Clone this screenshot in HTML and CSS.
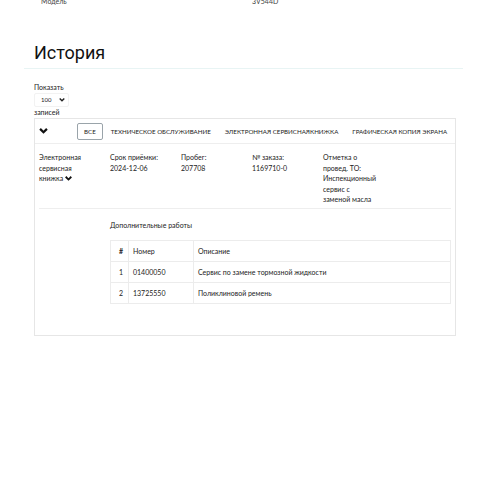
FILE: index.html
```html
<!DOCTYPE html>
<html lang="ru">
<head>
<meta charset="utf-8">
<link rel="stylesheet" href="styles.css">
</head>
<body>
<div class="spec">
  <span class="spec-label">Модель</span>
  <span class="spec-value">3V544D</span>
</div>
<div class="page">
  <h2 class="title">История</h2>
  <div class="rule"></div>
  <div class="inner">
    <div class="length">
      <div>Показать</div>
      <div class="select">100 <svg width="6" height="4" viewBox="0 0 10 7"><path d="M1 1l4 4 4-4" fill="none" stroke="#222" stroke-width="2.4"/></svg></div>
      <div>записей</div>
    </div>
    <div class="card">
      <div class="tabs">
        <span class="chev"><svg width="9" height="6" viewBox="0 0 10 7"><path d="M1 1l4 4 4-4" fill="none" stroke="#111" stroke-width="2.6"/></svg></span>
        <span class="tab active">ВСЕ</span>
        <span class="tab">ТЕХНИЧЕСКОЕ ОБСЛУЖИВАНИЕ</span>
        <span class="tab">ЭЛЕКТРОННАЯ СЕРВИСНАЯКНИЖКА</span>
        <span class="tab">ГРАФИЧЕСКАЯ КОПИЯ ЭКРАНА</span>
      </div>
      <div class="record">
        <div class="c1">Электронная сервисная книжка <svg width="7" height="5" viewBox="0 0 10 7"><path d="M1 1l4 4 4-4" fill="none" stroke="#111" stroke-width="2.6"/></svg></div>
        <div class="c2">Срок приёмки:<br>2024-12-06</div>
        <div class="c3">Пробег:<br>207708</div>
        <div class="c4">№ заказа:<br>1169710-0</div>
        <div class="c5">Отметка о провед. ТО:<br>Инспекционный сервис с заменой масла</div>
      </div>
      <div class="details">
        <div class="sub">Дополнительные работы</div>
        <table class="works">
          <tr><th>#</th><th>Номер</th><th>Описание</th></tr>
          <tr><td>1</td><td>01400050</td><td>Сервис по замене тормозной жидкости</td></tr>
          <tr><td>2</td><td>13725550</td><td>Поликлиновой ремень</td></tr>
        </table>
      </div>
    </div>
  </div>
</div>
</body>
</html>
```
FILE: styles.css
```css
html, body { margin: 0; padding: 0; background: #fff; }
body { font-family: "Lato", "Noto Sans", sans-serif; color: #222; font-size: 7px; }
.spec { display: flex; margin-top: -4px; height: 10px; line-height: 10px; font-size: 7px; color: #444; }
.spec-label { margin-left: 41px; width: 211px; }
.page { padding: 0 32px 0 24px; }
.title { margin: 35px 0 0 10px; font-family: "Roboto", sans-serif; font-weight: 400; font-size: 18px; line-height: 24px; color: #111; }
.rule { height: 1px; background: #e8f4f4; margin-top: 3px; }
.inner { padding-left: 10px; padding-right: 7px; }
.length { margin-top: 13px; line-height: 10px; }
.select { display: inline-flex; align-items: center; gap: 8px; border: 1px solid #f2f2f2; border-radius: 2px; padding: 0 3px 0 6px; height: 12px; margin: 1px 0 0 0; font-size: 6px; }
.card { border: 1px solid #e6e6e6; margin-top: 1px; height: 218px; box-sizing: border-box; }
.tabs { display: flex; align-items: center; height: 24px; border-bottom: 1px solid #eee; padding-left: 4px; white-space: nowrap; }
.chev { width: 10px; display: flex; justify-content: center; margin-right: 29px; }
.tab { font-size: 6.2px; margin-right: 14px; color: #222; }
.tab.active { border: 1px solid #9aa4aa; border-radius: 2px; padding: 4px 6px; margin-right: 8px; }
.record { display: grid; grid-template-columns: 60px 60px 60px 60px 56px; column-gap: 11px; padding: 8px 0 3px 0; margin: 0 4px; border-bottom: 1px solid #eee; line-height: 10.5px; font-size: 7px; }
.c1 { width: 46px; }
.c5 { width: 52px; }
.details { padding: 11px 4px 0 75px; }
.sub { font-size: 7px; line-height: 10px; }
.works { margin-top: 10px; width: 100%; border-collapse: collapse; font-size: 7px; }
.works th, .works td { border: 1px solid #ececec; height: 20px; padding: 0 4px; text-align: left; font-weight: 400; }
.works th:first-child { font-weight: 700; width: 9px; padding: 0 0 0 8px; }
.works td:first-child { padding: 0 0 0 8px; }
.works th:nth-child(2) { width: 56px; }
```
